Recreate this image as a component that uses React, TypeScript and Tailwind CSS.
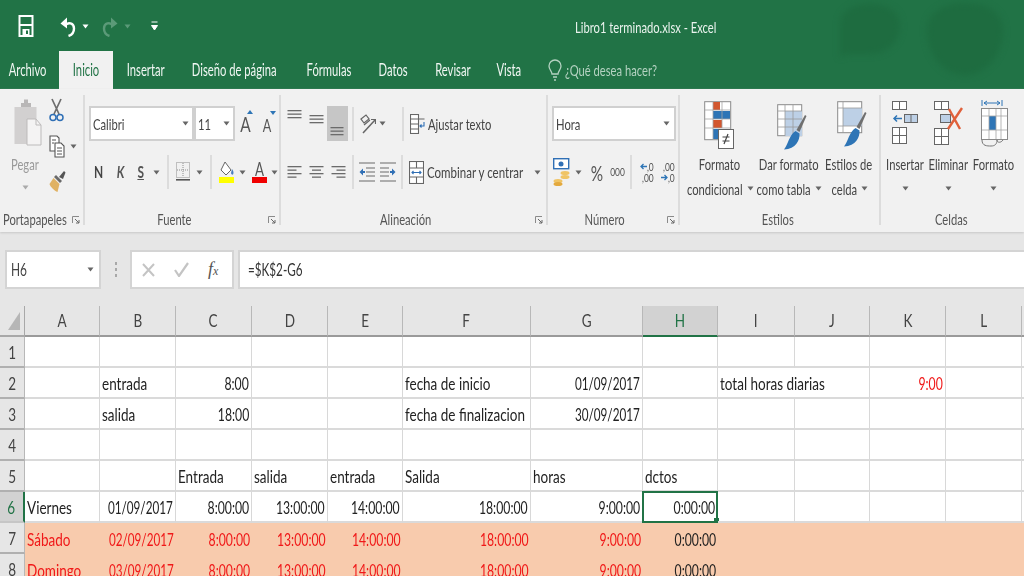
import type { ReactNode } from 'react'

// Calibri is not available, so text is Lato squeezed to the same width
function N({ children, w = '', align = 'center', k = 'scale-x-[.7]' }: { children: ReactNode; w?: string; align?: 'left' | 'center' | 'right'; k?: string }) {
  const origin = align === 'left' ? 'origin-left' : align === 'right' ? 'origin-right' : 'origin-center'
  const just = align === 'left' ? 'justify-start' : align === 'right' ? 'justify-end' : 'justify-center'
  return (
    <span className={'inline-flex whitespace-nowrap ' + just + ' ' + w}>
      <span className={'inline-block shrink-0 ' + k + ' ' + origin}>{children}</span>
    </span>
  )
}

// Small dropdown arrow used all over the ribbon
function Caret({ color = '#666', className = '' }: { color?: string; className?: string }) {
  return (
    <svg width="7" height="5" viewBox="0 0 7 5" className={className}>
      <path d="M0.5 0.5h6L3.5 4.5z" fill={color} />
    </svg>
  )
}

function Launcher() {
  return (
    <svg width="8" height="8" viewBox="0 0 8 8">
      <path d="M0.5 7V0.5H7" fill="none" stroke="#8a8a8a" />
      <path d="M3 3l4 4M7 4v3H4" fill="none" stroke="#666" />
    </svg>
  )
}

function Sep({ className = 'h-[34px]' }: { className?: string }) {
  return <div className={'w-[2px] bg-[#dcdcdc] ' + className} />
}

function AlignLines({ widths, gap = 3.5, y = 1, anchor = 'left' }: { widths: number[]; gap?: number; y?: number; anchor?: 'left' | 'center' | 'right' }) {
  return (
    <svg width="15" height="16" viewBox="0 0 15 16">
      {widths.map((w, i) => {
        const x = anchor === 'left' ? 0.5 : anchor === 'right' ? 14.5 - w : 7.5 - w / 2
        return <rect key={i} x={x} y={y + i * gap} width={w} height="1.3" fill="#6b6b6b" />
      })}
    </svg>
  )
}

function SaveIcon() {
  return (
    <svg width="16" height="22" viewBox="0 0 16 22" fill="none" stroke="#fff" strokeWidth="2">
      <rect x="1.5" y="1" width="13" height="20" />
      <path d="M1.5 10h13" />
      <rect x="4.5" y="14" width="7" height="7" fill="#fff" stroke="none" />
      <rect x="8" y="15.5" width="2" height="3.5" fill="#217346" stroke="none" />
    </svg>
  )
}

function UndoIcon({ color, flip = false }: { color: string; flip?: boolean }) {
  return (
    <svg width="16" height="21" viewBox="0 0 16 21" fill="none" className={flip ? '-scale-x-100' : ''}>
      <path d="M5 9.5C8 5.5 14 7 14 12.5c0 3.5-2.5 6.5-5.5 7.5" stroke={color} strokeWidth="2.4" />
      <path d="M0.5 7.5L7 1.5v11z" fill={color} />
    </svg>
  )
}

function ClipboardIcon() {
  return (
    <svg width="28" height="48" viewBox="0 0 28 48">
      <rect x="0.5" y="9" width="22" height="37" fill="#d2d0d0" />
      <path d="M7 9V5h3V1.5h4V5h3v4z" fill="#b9b7b7" />
      <path d="M13 21h9l5 6v20H13z" fill="#f4f3f3" stroke="#bdbbbb" />
      <path d="M22 21v6h5" fill="none" stroke="#bdbbbb" />
    </svg>
  )
}

function ScissorsIcon() {
  return (
    <svg width="15" height="24" viewBox="0 0 15 24" fill="none">
      <path d="M3 1l7 15M12 1L5 16" stroke="#6d6d6d" strokeWidth="1.7" />
      <circle cx="4" cy="19.5" r="3" stroke="#2f6fb5" strokeWidth="1.5" />
      <circle cx="11" cy="19.5" r="3" stroke="#2f6fb5" strokeWidth="1.5" />
    </svg>
  )
}

function CopyIcon() {
  return (
    <svg width="16" height="23" viewBox="0 0 16 23" fill="#fff" stroke="#555" strokeWidth="1.1">
      <path d="M1 1h7l2 2v13H1z" />
      <path d="M6 8h6l3 3v11H6z" />
      <path d="M3 5h4M3 8h2M8 13h5M8 16h5M8 19h5" fill="none" />
    </svg>
  )
}

function BrushIcon() {
  return (
    <svg width="17" height="23" viewBox="0 0 17 23">
      <path d="M10 7l5-6 1.5 1.5L14 9z" fill="#555" />
      <path d="M7 5l6 6-2 2-6-6z" fill="#6a6a6a" />
      <path d="M4.5 8l6 6-2 8c-3-1-7-5-8-8z" fill="#e0b263" />
    </svg>
  )
}

function BordersIcon() {
  return (
    <svg width="14" height="20" viewBox="0 0 14 20">
      <rect x="0.5" y="0.5" width="13" height="15" fill="none" stroke="#8d8d8d" strokeDasharray="1 1" />
      <path d="M7 1v14M1 8h12" stroke="#8d8d8d" strokeDasharray="1 1" />
      <rect x="0" y="17" width="14" height="1.6" fill="#555" />
    </svg>
  )
}

function FillIcon() {
  return (
    <svg width="16" height="22" viewBox="0 0 16 22">
      <path d="M6 1l6 8-5 5-5-5z" fill="#fff" stroke="#666" />
      <path d="M13 8c1.5 2 2 4 1 5.5-1 .5-2-.5-2-1.5z" fill="#4a7fc0" />
      <rect x="0" y="16" width="15" height="6" fill="#ffff00" />
    </svg>
  )
}

function OrientationIcon() {
  return (
    <svg width="16" height="20" viewBox="0 0 16 20" fill="none" stroke="#666" strokeWidth="1.2">
      <path d="M1 5l5-4 3 4-5 4zM4 11l6-5" />
      <path d="M3 19L15 6" strokeWidth="1.5" />
      <path d="M11 5.5h4.5V10" />
    </svg>
  )
}

function WrapIcon() {
  return (
    <svg width="15" height="20" viewBox="0 0 15 20" fill="none" stroke="#666" strokeWidth="1.1">
      <rect x="0.5" y="0.5" width="8" height="19" fill="#fff" />
      <path d="M0.5 5h14M0.5 10h8M0.5 15h8" />
      <path d="M14 8v4h-4M11.5 10.5L10 12l1.5 1.5" stroke="#2f6fb5" />
    </svg>
  )
}

function MergeIcon() {
  return (
    <svg width="15" height="23" viewBox="0 0 15 23" fill="#fff" stroke="#666" strokeWidth="1.1">
      <rect x="0.5" y="0.5" width="14" height="22" />
      <path d="M0.5 7h14M0.5 16h14M7.5 0.5v6.5M7.5 16v6.5" />
      <path d="M3 11.5h9M4.5 10L3 11.5 4.5 13M10.5 10l1.5 1.5-1.5 1.5" stroke="#2f6fb5" fill="none" />
    </svg>
  )
}

function IndentIcon({ flip = false }: { flip?: boolean }) {
  return (
    <svg width="16" height="20" viewBox="0 0 16 20" className={flip ? '-scale-x-100' : ''}>
      <path d="M0 1h16M7 6h9M7 10h9M7 14h9M0 19h16" stroke="#6b6b6b" strokeWidth="1.2" />
      <path d="M0.5 10L4 6.5v2.5h2v2H4v2.5z" fill="#2f6fb5" />
    </svg>
  )
}

function AccountingIcon() {
  return (
    <svg width="18" height="28" viewBox="0 0 18 28">
      <rect x="0.7" y="0.7" width="15" height="10" fill="#fff" stroke="#2f6fb5" strokeWidth="1.4" />
      <circle cx="8" cy="6" r="2.5" fill="#2f6fb5" />
      <ellipse cx="12" cy="15" rx="4.5" ry="2" fill="#f0c465" />
      <ellipse cx="12" cy="19" rx="4.5" ry="2" fill="#f0c465" />
      <ellipse cx="5" cy="23" rx="4.5" ry="2" fill="#f0c465" />
      <ellipse cx="5" cy="26" rx="4.5" ry="2" fill="#e3a93e" />
    </svg>
  )
}

function DecimalArrow({ flip = false }: { flip?: boolean }) {
  return (
    <svg width="7" height="7" viewBox="0 0 7 7" fill="none" stroke="#2e75b6" strokeWidth="1.3" className={flip ? '-scale-x-100' : ''}>
      <path d="M7 3.5H1M3.5 1L1 3.5 3.5 6" />
    </svg>
  )
}

function ConditionalIcon() {
  return (
    <svg width="31" height="48" viewBox="0 0 31 48">
      <rect x="0.7" y="0.7" width="26" height="38" fill="#fff" stroke="#8a8a8a" />
      <rect x="9" y="1" width="7" height="8" fill="#d2572f" />
      <rect x="9" y="10" width="17" height="8" fill="#2e75b6" />
      <rect x="9" y="19" width="9" height="8" fill="#d2572f" />
      <rect x="9" y="28" width="5" height="10" fill="#2e75b6" />
      <path d="M9 1v38M18 1v26M1 9h26M1 18h26M1 27h26" stroke="#a5a5a5" strokeWidth="0.8" />
      <rect x="14.5" y="28.5" width="15" height="19" fill="#fff" stroke="#666" />
      <path d="M18.5 36h7M18.5 40h7M24 33l-4 10" stroke="#444" strokeWidth="1.2" />
    </svg>
  )
}

function TableBrushIcon({ solid = false }: { solid?: boolean }) {
  return (
    <svg width="30" height="46" viewBox="0 0 30 46">
      <rect x="0.7" y="0.7" width="24" height="31" fill="#fff" stroke="#8a8a8a" />
      {solid ? (
        <rect x="6" y="7" width="19" height="18" fill="#bdd0e6" />
      ) : (
        <rect x="8" y="7" width="17" height="25" fill="#bdd0e6" />
      )}
      {solid ? (
        <path d="M6 1v31M1 7h24M1 25h24" stroke="#9a9a9a" strokeWidth="0.8" />
      ) : (
        <path d="M8 1v31M16 1v31M1 7h24M1 15h24M1 23h24" stroke="#9a9a9a" strokeWidth="0.8" />
      )}
      <path d="M28 11l1.5 1-7 16-3-2z" fill="#6f6f6f" />
      <path d="M18.5 27l4 2.5C23 36 19 45 7 45.5 11 41 12 31 18.5 27z" fill="#2e75b6" />
    </svg>
  )
}

function InsertCellsIcon() {
  return (
    <svg width="26" height="43" viewBox="0 0 26 43" fill="#fff" stroke="#666">
      <rect x="0.5" y="0.5" width="14" height="8" />
      <path d="M7.5 0.5v8" />
      <rect x="12.5" y="13.5" width="13" height="8" fill="#bdd0e6" />
      <path d="M19 13.5v8" />
      <path d="M2 17.5h8M5 14.5l-3 3 3 3" stroke="#2e75b6" strokeWidth="1.5" fill="none" />
      <rect x="0.5" y="26.5" width="14" height="16" />
      <path d="M7.5 26.5v16M0.5 34.5h14" />
    </svg>
  )
}

function DeleteCellsIcon() {
  return (
    <svg width="29" height="44" viewBox="0 0 29 44" fill="#fff" stroke="#666">
      <rect x="0.5" y="0.5" width="14" height="8" />
      <path d="M7.5 0.5v8" />
      <rect x="6.5" y="13.5" width="10" height="8" fill="#bdd0e6" />
      <rect x="0.5" y="27.5" width="14" height="16" />
      <path d="M7.5 27.5v16M0.5 35.5h14" />
      <path d="M15 8l11 20M28 7L14 28" stroke="#e0603a" strokeWidth="2.4" fill="none" />
    </svg>
  )
}

function FormatCellsIcon() {
  return (
    <svg width="27" height="48" viewBox="0 0 27 48" fill="none" className="-mt-[2px] ml-[2px]">
      <path d="M1 1v6M21 1v6M3 4h16M3 4l3-2M3 4l3 2M19 4l-3-2M19 4l-3 2" stroke="#2e75b6" />
      <rect x="0.5" y="9.5" width="26" height="31" fill="#fff" stroke="#8a8a8a" />
      <rect x="8" y="17" width="7" height="14" fill="#2e75b6" />
      <path d="M8 10v30M15 10v30M20 10v30M1 17h25M1 31h25" stroke="#a5a5a5" strokeWidth="0.8" />
      <path d="M1 41c0 6 5 6 9 6s6-2 6-6c0 3 4 3 6 0" stroke="#777" />
    </svg>
  )
}

function Tab({ label, width, active = false }: { label: string; width: string; active?: boolean }) {
  return (
    <div
      className={
        'h-[38px] flex items-center justify-center text-[17px] ' +
        width +
        (active ? ' bg-[#f1f1f1] text-[#217346]' : ' text-[#f1f7f3]')
      }
    >
      <N k="scale-x-[.66]">{label}</N>
    </div>
  )
}

function Group({ label, width, labelClass, launcher = false, last = false, children }: { label: string; width: string; labelClass?: string; launcher?: boolean; last?: boolean; children: ReactNode }) {
  return (
    <div className={'relative flex flex-col h-[130px] mt-[6px] ' + width + (last ? '' : ' border-r-2 border-[#dcdcdc]')}>
      <div className="flex-1 min-h-0">{children}</div>
      <div className={'h-[12px] flex items-center justify-center text-[16px] text-[#555] ' + (labelClass ?? '')}>
        <N align={labelClass?.includes('justify-start') ? 'left' : 'center'}>{label}</N>
      </div>
      {launcher && (
        <div className="absolute right-[3px] bottom-[1px] flex">
          <Launcher />
        </div>
      )}
    </div>
  )
}

type Line = { t: string; w: string }

function BigButton({ width, icon, lines, caretLine = false, iconHeight = 'h-[50px]' }: { width: string; icon: ReactNode; lines: Line[]; caretLine?: boolean; iconHeight?: string }) {
  return (
    <div className={'flex flex-col items-center text-[16px] text-[#444] whitespace-nowrap ' + width}>
      <div className={'flex items-start justify-center ' + iconHeight}>{icon}</div>
      {lines.map((line, i) => (
        <div key={i} className="flex items-center gap-[3px] h-[25px]">
          <N w={line.w}>{line.t}</N>
          {i === lines.length - 1 && !caretLine && i > 0 && <Caret />}
        </div>
      ))}
      {caretLine && (
        <div className="h-[25px] flex items-center">
          <Caret />
        </div>
      )}
    </div>
  )
}

function Ribbon() {
  return (
    <div className="flex h-[143px] bg-[#f1f1f1] shadow-[0_1px_2px_#c8c8c8] relative">
      <Group label="Portapapeles" width="w-[85px]" launcher labelClass="justify-start pl-[3px]">
        <div className="flex pl-[14px] pt-[3px]">
          <div className="flex flex-col items-center w-[28px]">
            <ClipboardIcon />
            <div className="mt-[8px] pr-[6px] text-[16px] text-[#9a9a9a] leading-[20px]">
              <N>Pegar</N>
            </div>
            <Caret color="#aaa" className="mt-[11px] mr-[6px]" />
          </div>
          <div className="flex flex-col ml-[7px]">
            <ScissorsIcon />
            <div className="flex items-center gap-[2px] mt-[13px]">
              <CopyIcon />
              <Caret className="ml-[3px]" />
            </div>
            <div className="mt-[12px]">
              <BrushIcon />
            </div>
          </div>
        </div>
      </Group>

      <Group label="Fuente" width="w-[196px]" launcher labelClass="pr-[16px]">
        <div className="flex flex-col pl-[4px]">
          <div className="flex items-center mt-[11px]">
            <div className="w-[105px] h-[35px] bg-white border-2 border-[#d0d0d0] flex items-center justify-between pl-[2px] pr-[3px] text-[16px] text-[#444]">
              <N align="left">Calibri</N> <Caret />
            </div>
            <div className="w-[41px] h-[35px] bg-white border-2 border-[#d0d0d0] flex items-center justify-between pl-[2px] pr-[3px] text-[16px] text-[#444]">
              <N align="left">11</N> <Caret />
            </div>
            <div className="relative ml-[3px] w-[14px] text-[22px] leading-none text-[#555]">
              <N>A</N>
              <span className="absolute -top-[3px] -right-[1px] border-x-[3px] border-b-[4px] border-x-transparent border-b-[#2e75b6]" />
            </div>
            <div className="relative ml-[9px] w-[12px] text-[18px] leading-none text-[#555] mt-[2px]">
              <N>A</N>
              <span className="absolute -top-[5px] -right-[3px] border-x-[3px] border-t-[4px] border-x-transparent border-t-[#2e75b6]" />
            </div>
          </div>
          <div className="flex items-center mt-[13px] h-[36px] text-[#444] text-[17px]">
            <span className="ml-[6px] w-[8px] font-bold flex justify-center">
              <N>N</N>
            </span>
            <span className="ml-[13px] w-[8px] font-bold italic text-[#555] flex justify-center">
              <N>K</N>
            </span>
            <span className="ml-[13px] w-[8px] font-bold underline text-[#555] flex justify-center">
              <N>S</N>
            </span>
            <Caret className="ml-[8px]" />
            <Sep className="h-[34px] ml-[7px]" />
            <div className="ml-[7px] flex">
              <BordersIcon />
            </div>
            <Caret className="ml-[6px]" />
            <Sep className="h-[34px] ml-[7px]" />
            <div className="ml-[7px] flex">
              <FillIcon />
            </div>
            <Caret className="ml-[4px]" />
            <div className="ml-[6px] w-[15px] flex flex-col items-center leading-[16px] text-[19px] text-[#555]">
              <N>A</N>
              <div className="w-[15px] h-[6px] bg-[#f00000]" />
            </div>
            <Caret className="ml-[4px]" />
          </div>
        </div>
      </Group>

      <Group label="Alineación" width="w-[267px]" launcher labelClass="pr-[16px]">
        <div className="flex flex-col pl-[6px]">
          <div className="flex items-center h-[35px] mt-[11px]">
            <div className="w-[15px] self-start mt-[3px]">
              <AlignLines widths={[14, 14, 14]} y={1} />
            </div>
            <div className="w-[15px] ml-[7px] self-start mt-[6px]">
              <AlignLines widths={[14, 14, 14]} y={3} />
            </div>
            <div className="ml-[3px] w-[21px] h-[35px] bg-[#c6c6c6] flex items-end justify-center pb-[3px]">
              <AlignLines widths={[13, 13, 13]} y={5} />
            </div>
            <Sep className="h-[34px] ml-[4px]" />
            <div className="ml-[6px] flex">
              <OrientationIcon />
            </div>
            <Caret className="ml-[3px]" />
            <Sep className="h-[34px] ml-[16px]" />
            <div className="ml-[6px] flex">
              <WrapIcon />
            </div>
            <span className="ml-[3px] text-[16px] text-[#444]">
              <N w="w-[64px]" align="left">Ajustar texto</N>
            </span>
          </div>
          <div className="flex items-center h-[36px] mt-[13px]">
            <AlignLines widths={[14, 9, 14, 9]} y={2} />
            <div className="ml-[7px] flex">
              <AlignLines widths={[14, 9, 14, 9]} y={2} anchor="center" />
            </div>
            <div className="ml-[7px] flex">
              <AlignLines widths={[14, 9, 14, 9]} y={2} anchor="right" />
            </div>
            <Sep className="h-[34px] ml-[6px]" />
            <div className="ml-[5px] flex">
              <IndentIcon />
            </div>
            <div className="ml-[5px] flex">
              <IndentIcon flip />
            </div>
            <Sep className="h-[34px] ml-[5px]" />
            <div className="ml-[6px] flex">
              <MergeIcon />
            </div>
            <span className="ml-[3px] text-[16px] text-[#444]">
              <N w="w-[98px]" align="left" k="scale-x-[.72]">Combinar y centrar</N>
            </span>
            <Caret className="ml-[9px]" />
          </div>
        </div>
      </Group>

      <Group label="Número" width="w-[132px]" launcher labelClass="pr-[16px]">
        <div className="flex flex-col pl-[4px]">
          <div className="mt-[11px] w-[124px] h-[35px] bg-white border-2 border-[#d0d0d0] flex items-center justify-between pl-[2px] pr-[4px] text-[16px] text-[#444]">
            <N align="left">Hora</N> <Caret />
          </div>
          <div className="flex items-center h-[36px] mt-[13px] text-[#555]">
            <div className="ml-[1px] flex">
              <AccountingIcon />
            </div>
            <Caret className="ml-[4px]" />
            <span className="ml-[7px] w-[15px] text-[22px] flex justify-center">
              <N>%</N>
            </span>
            <span className="ml-[5px] w-[16px] text-[12px] flex justify-center">
              <N>000</N>
            </span>
            <Sep className="h-[34px] ml-[5px]" />
            <div className="ml-[7px] w-[15px] flex flex-col items-end text-[12px] leading-[11px]">
              <span className="flex items-center">
                <DecimalArrow />
                <N w="w-[7px]" align="right">,0</N>
              </span>
              <N w="w-[13px]" align="right">,00</N>
            </div>
            <div className="ml-[6px] w-[15px] flex flex-col items-end text-[12px] leading-[11px]">
              <N w="w-[13px]" align="right">,00</N>
              <span className="flex items-center">
                <DecimalArrow flip />
                <N w="w-[7px]" align="right">,0</N>
              </span>
            </div>
          </div>
        </div>
      </Group>

      <Group label="Estilos" width="w-[201px]" labelClass="pr-[4px]">
        <div className="flex pt-[6px] pl-[3px]">
          <BigButton width="w-[73px]" icon={<ConditionalIcon />} lines={[{ t: 'Formato', w: 'w-[43px]' }, { t: 'condicional', w: 'w-[58px]' }]} />
          <BigButton width="w-[66px]" icon={<TableBrushIcon />} lines={[{ t: 'Dar formato', w: 'w-[60px]' }, { t: 'como tabla', w: 'w-[56px]' }]} iconHeight="h-[50px] pt-[3px] pl-[6px]" />
          <BigButton width="w-[54px]" icon={<TableBrushIcon solid />} lines={[{ t: 'Estilos de', w: 'w-[47px]' }, { t: 'celda', w: 'w-[28px]' }]} iconHeight="h-[50px] pl-[6px]" />
        </div>
      </Group>

      <Group label="Celdas" width="flex-1" last labelClass="pr-[2px]">
        <div className="flex pt-[6px] pl-[3px]">
          <BigButton width="w-[42px]" icon={<InsertCellsIcon />} lines={[{ t: 'Insertar', w: 'w-[36px]' }]} caretLine />
          <BigButton width="w-[44px]" icon={<DeleteCellsIcon />} lines={[{ t: 'Eliminar', w: 'w-[39px]' }]} caretLine />
          <BigButton width="w-[47px]" icon={<FormatCellsIcon />} lines={[{ t: 'Formato', w: 'w-[42px]' }]} caretLine />
        </div>
      </Group>
    </div>
  )
}

function FormulaBar() {
  return (
    <div className="h-[74px] bg-[#e6e6e6] pt-[18px] pl-[5px] flex items-start">
      <div className="w-[96px] h-[39px] bg-white border-2 border-[#d4d4d4] flex items-center justify-between pl-[4px] pr-[5px] text-[17px] text-[#444]">
        <N align="left">H6</N> <Caret />
      </div>
      <div className="w-[29px] flex flex-col items-center gap-[3px] mt-[12px]">
        <div className="w-[2px] h-[3px] bg-[#a8a8a8]" />
        <div className="w-[2px] h-[3px] bg-[#a8a8a8]" />
        <div className="w-[2px] h-[3px] bg-[#a8a8a8]" />
      </div>
      <div className="w-[104px] h-[39px] bg-white border-2 border-[#d4d4d4] flex items-center pl-[10px] text-[#444]">
        <svg width="13" height="14" viewBox="0 0 13 14" fill="none" stroke="#c4c4c4" strokeWidth="2">
          <path d="M1 1l11 12M12 1L1 13" />
        </svg>
        <svg width="15" height="15" viewBox="0 0 15 15" fill="none" stroke="#c4c4c4" strokeWidth="2.2" className="ml-[19px]">
          <path d="M1 8l4 6L14 1" />
        </svg>
        <span className="ml-[19px] text-[18px] italic font-['Liberation_Serif',serif] text-[#555]">
          f<span className="text-[12px]">x</span>
        </span>
      </div>
      <div className="ml-[4px] flex-1 h-[39px] bg-white border-y-2 border-l-2 border-[#d4d4d4] flex items-center pl-[8px] text-[18px] text-[#333]">
        <N align="left" k="scale-x-[.65]">=$K$2-G6</N>
      </div>
    </div>
  )
}

const columns = ['A', 'B', 'C', 'D', 'E', 'F', 'G', 'H', 'I', 'J', 'K', 'L']

type Cell = { t: string; right?: boolean; red?: boolean }

function timeRow(day: string, date: string): Record<string, Cell> {
  return {
    A: { t: day },
    B: { t: date, right: true },
    C: { t: '8:00:00', right: true },
    D: { t: '13:00:00', right: true },
    E: { t: '14:00:00', right: true },
    F: { t: '18:00:00', right: true },
    G: { t: '9:00:00', right: true },
    H: { t: '0:00:00', right: true },
  }
}

const sheet: Record<number, Record<string, Cell>> = {
  2: {
    B: { t: 'entrada' },
    C: { t: '8:00', right: true },
    F: { t: 'fecha de inicio' },
    G: { t: '01/09/2017', right: true },
    I: { t: 'total horas diarias' },
    K: { t: '9:00', right: true, red: true },
  },
  3: {
    B: { t: 'salida' },
    C: { t: '18:00', right: true },
    F: { t: 'fecha de finalizacion' },
    G: { t: '30/09/2017', right: true },
  },
  5: {
    C: { t: 'Entrada' },
    D: { t: 'salida' },
    E: { t: 'entrada' },
    F: { t: 'Salida' },
    G: { t: 'horas' },
    H: { t: 'dctos' },
  },
  6: timeRow('Viernes', '01/09/2017'),
  7: timeRow('Sábado', '02/09/2017'),
  8: timeRow('Domingo', '03/09/2017'),
}

function Sheet() {
  return (
    <div className="grid grid-cols-[25px_75px_76px_76px_76px_75px_128px_112px_75px_77px_75px_76px_76px_2px] grid-rows-[31px_31px_31px_31px_31px_31px_31px_31px_31px] bg-white text-[18px] text-[#222]">
      <div className="bg-[#e6e6e6] border-r border-b-2 border-[#a8a8a8] flex items-end justify-end pr-[4px] pb-[5px]">
        <svg width="12" height="18" viewBox="0 0 12 18">
          <path d="M12 0v18H0z" fill="#b6b6b6" />
        </svg>
      </div>
      {columns.map((c) => (
        <div
          key={c}
          className={
            'flex items-center justify-center border-b-2 border-r ' +
            (c === 'H'
              ? 'bg-[#d2d2d2] text-[#217346] border-b-[#217346] border-r-[#b8b8b8]'
              : 'bg-[#e6e6e6] text-[#444] border-b-[#9a9a9a] border-r-[#b8b8b8]')
          }
        >
          <N k="scale-x-[.75]">{c}</N>
        </div>
      ))}
      <div className="bg-[#e6e6e6] border-b-2 border-[#9a9a9a]" />

      {[1, 2, 3, 4, 5, 6, 7, 8].map((r) => {
        const shaded = r >= 7
        return (
          <div key={r} className="contents">
            <div
              className={
                'flex items-center justify-center pt-[2px] border-b-2 text-[#444] ' +
                (r === 6 ? 'bg-[#d2d2d2] text-[#217346] border-r-2 border-r-[#217346] border-b-[#c6c6c6]' : 'bg-[#e6e6e6] border-r border-r-[#b8b8b8] border-b-[#b0b0b0]')
              }
            >
              <N k="scale-x-[.75]">{r}</N>
            </div>
            {columns.map((c) => {
              // the text of I2 runs over J2, so that gridline is not drawn
              if (r === 2 && c === 'J') return null
              const cell = sheet[r]?.[c]
              const span = r === 2 && c === 'I'
              const selected = r === 6 && c === 'H'
              const red = cell?.red || (shaded && c !== 'H')
              const isDate = cell ? cell.t.includes('/') : false
              const isTime = cell ? /^[\d:]+$/.test(cell.t) : false
              return (
                <div
                  key={c}
                  className={
                    'relative flex items-center whitespace-nowrap px-[2px] pt-[2px] ' +
                    (span ? 'col-span-2 ' : '') +
                    (cell?.right ? 'justify-end ' : '') +
                    (shaded ? 'bg-[#f8cbad] ' : 'border-r border-b-2 border-r-[#d8d8d8] border-b-[#dadada] ') +
                    (red ? 'text-[#f01818]' : '')
                  }
                >
                  {cell && (
                    <N align={cell.right ? 'right' : 'left'} k={isDate ? 'scale-x-[.65]' : isTime ? 'scale-x-[.68]' : 'scale-x-[.75]'}>
                      {cell.t}
                    </N>
                  )}
                  {selected && (
                    <div className="absolute -left-[1px] -top-[1px] -right-[1px] -bottom-[2px] border-2 border-[#217346]">
                      <div className="absolute -right-[3px] -bottom-[3px] w-[5px] h-[6px] bg-[#217346]" />
                    </div>
                  )}
                </div>
              )
            })}
            <div className={shaded ? 'bg-[#f8cbad]' : 'border-b-2 border-[#dadada]'} />
          </div>
        )
      })}
    </div>
  )
}

export default function App() {
  return (
    <div className="w-[1024px] h-[576px] overflow-hidden bg-[#e6e6e6] font-['Lato',sans-serif]">
      <div className="relative bg-[#217346] h-[89px] overflow-hidden">
        <svg width="180" height="80" viewBox="0 0 180 80" className="absolute left-[835px] top-0 blur-[3px]">
          <path d="M5 25C5 10 20 4 35 4s30 6 30 22-14 28-30 28H12l-7 3z" fill="#1e6c40" />
          <path d="M92 30C92 12 110 3 130 3s38 8 38 28-14 44-38 44-38-22-38-45z" fill="#1e6c40" />
        </svg>
        <div className="relative flex items-center h-[51px] pl-[18px] pt-[1px]">
          <SaveIcon />
          <div className="ml-[26px] flex">
            <UndoIcon color="#ffffff" />
          </div>
          <Caret color="#fff" className="ml-[6px]" />
          <div className="ml-[13px] flex">
            <UndoIcon color="#5b9a78" flip />
          </div>
          <Caret color="#5b9a78" className="ml-[6px]" />
          <svg width="7" height="10" viewBox="0 0 7 10" className="ml-[20px]">
            <path d="M0.5 1h6M0.5 4.5h6L3.5 9z" stroke="#fff" fill="#fff" strokeWidth="1" />
          </svg>
          <span className="ml-[417px] mt-[2px] text-[16px] text-[#eaf3ee]">
            <N w="w-[141px]" align="left">Libro1 terminado.xlsx - Excel</N>
          </span>
        </div>
        <div className="relative flex items-end">
          <Tab label="Archivo" width="w-[59px] pr-[4px]" />
          <Tab label="Inicio" width="w-[54px]" active />
          <Tab label="Insertar" width="w-[65px]" />
          <Tab label="Diseño de página" width="w-[113px]" />
          <Tab label="Fórmulas" width="w-[75px]" />
          <Tab label="Datos" width="w-[55px]" />
          <Tab label="Revisar" width="w-[63px]" />
          <Tab label="Vista" width="w-[50px]" />
          <div className="h-[38px] ml-[14px] flex items-center gap-[3px] text-[16px] text-[#b4d2c1]">
            <svg width="14" height="22" viewBox="0 0 14 22" fill="none" stroke="#b4d2c1" strokeWidth="1.3">
              <path d="M4 15c0-3-3-4-3-8a6 6 0 0112 0c0 4-3 5-3 8z" />
              <path d="M5 18h4M6 21h2" />
            </svg>
            <N w="w-[91px]" align="left">¿Qué desea hacer?</N>
          </div>
        </div>
      </div>
      <Ribbon />
      <FormulaBar />
      <Sheet />
    </div>
  )
}
